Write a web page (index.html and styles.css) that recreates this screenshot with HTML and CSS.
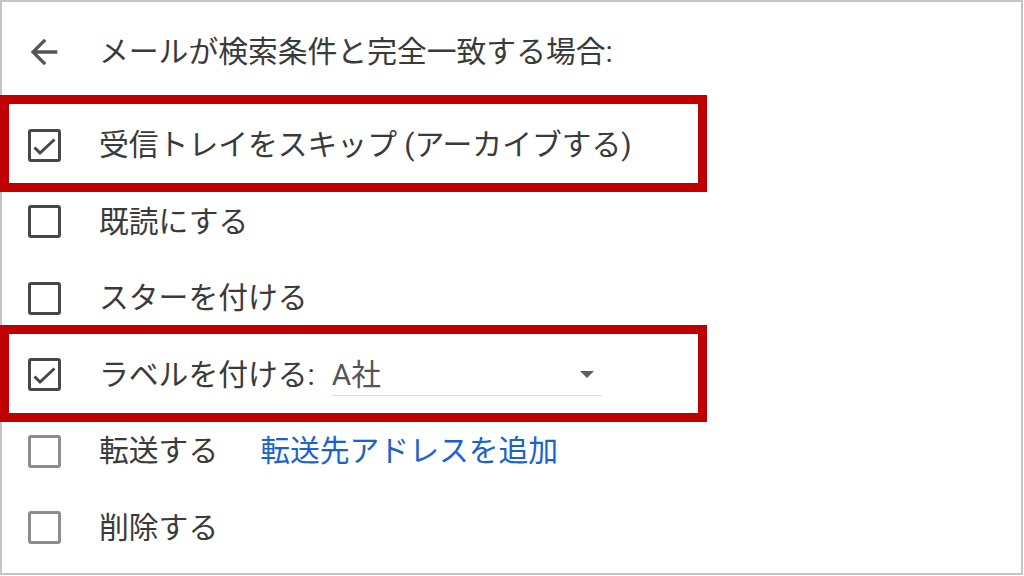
FILE: index.html
```html
<!DOCTYPE html>
<html lang="ja">
<head>
    <meta charset="UTF-8">
    <title>フィルタ</title>
    <link rel="stylesheet" href="styles.css">
</head>
<body>
    <div class="frame">
        <!-- Header -->
        <div class="head">
            <svg class="back" viewBox="0 0 24 24"><path d="M20 11H7.83l5.59-5.59L12 4l-8 8 8 8 1.41-1.41L7.83 13H20v-2z"/></svg>
            <span class="title">メールが検索条件と完全一致する場合:</span>
        </div>

        <!-- Actions -->
        <ul class="actions">
            <li class="action marked">
                <span class="box"><svg viewBox="0 0 27 27"><polyline points="3.5,15.5 9,21 23.5,7.5"/></svg></span>
                <span class="label">受信トレイをスキップ (アーカイブする)</span>
            </li>
            <li class="action">
                <span class="box"></span>
                <span class="label">既読にする</span>
            </li>
            <li class="action">
                <span class="box"></span>
                <span class="label">スターを付ける</span>
            </li>
            <li class="action marked">
                <span class="box"><svg viewBox="0 0 27 27"><polyline points="3.5,15.5 9,21 23.5,7.5"/></svg></span>
                <span class="label">ラベルを付ける:</span>
                <span class="select"><span class="value">A社</span><span class="caret"></span></span>
            </li>
            <li class="action">
                <span class="box light"></span>
                <span class="label">転送する</span>
                <a href="#" class="link">転送先アドレスを追加</a>
            </li>
            <li class="action">
                <span class="box light"></span>
                <span class="label">削除する</span>
            </li>
        </ul>
    </div>
</body>
</html>
```
FILE: styles.css
```css
body {
    margin: 0;
    background-color: #fff;
    font-family: Roboto, "Noto Sans CJK JP", sans-serif;
    color: #3a3a3a;
    overflow: hidden;
}
.frame {
    width: 1023px;
    height: 575px;
    box-sizing: border-box;
    border: 2px solid #c4c4c4;
}
.head {
    height: 100px;
    display: flex;
    align-items: center;
    padding-left: 22px;
}
.back {
    width: 40px;
    height: 40px;
    fill: #555;
}
.title {
    margin: 0 0 6px 35px;
    font-size: 29.8px;
}
.actions {
    list-style: none;
    margin: 5px 0 0;
    padding: 0;
}
.action {
    position: relative;
    height: 76.5px;
    display: flex;
    align-items: center;
    padding-left: 26px;
    font-size: 29.8px;
}
/* red annotation frame */
.action.marked::after {
    content: "";
    position: absolute;
    left: -2px;
    top: -12px;
    width: 707px;
    height: 97px;
    box-sizing: border-box;
    border: 9px solid #c00000;
}
.box {
    width: 33px;
    height: 33px;
    box-sizing: border-box;
    border: 3px solid #474747;
    border-radius: 3px;
    flex-shrink: 0;
}
.box.light {
    border-color: #8c8c8c;
}
.box svg {
    display: block;
    width: 27px;
    height: 27px;
    fill: none;
    stroke: #474747;
    stroke-width: 3;
}
.label {
    margin: 0 0 6px 38px;
}
.select {
    display: flex;
    align-items: center;
    justify-content: space-between;
    width: 262px;
    height: 40px;
    margin: 0 0 0 17px;
    padding-right: 8px;
    border-bottom: 1px solid #dedede;
    color: #555;
    position: relative;
    top: 1px;
}
.value {
    margin-bottom: 6px;
}
.caret {
    width: 0;
    height: 0;
    border-left: 7px solid transparent;
    border-right: 7px solid transparent;
    border-top: 7px solid #5f5f5f;
    margin-bottom: 2px;
}
.link {
    margin: 0 0 6px 42px;
    color: #1a62cf;
    text-decoration: none;
}
```
